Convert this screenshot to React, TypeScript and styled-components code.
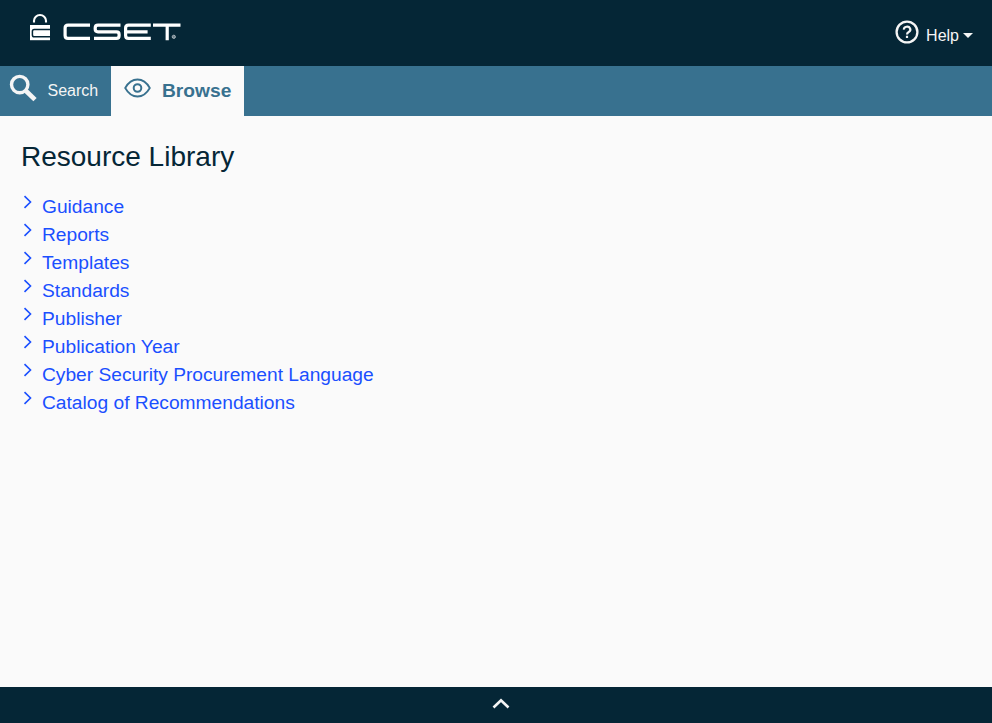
import React from "react";
import styled, { createGlobalStyle } from "styled-components";

const navy = "#052636";
const steel = "#38718f";
const paper = "#fafafa";
const link = "#1a4fff";

const GlobalStyle = createGlobalStyle`
  * { box-sizing: border-box; }
  body { margin: 0; background: ${paper}; color: ${navy}; font-family: "Liberation Sans", Arial, sans-serif; font-size: 16px; }
  button { font: inherit; color: inherit; border: 0; background: none; padding: 0; cursor: pointer; }
  svg { display: block; flex: none; }
`;

const Page = styled.div`
  display: flex;
  flex-direction: column;
  height: 100vh;
`;

const Header = styled.header`
  display: flex;
  justify-content: space-between;
  height: 66px;
  padding: 12px 19px 0 28px;
  background: ${navy};
  color: #f5f5f5;
`;

const HelpButton = styled.button`
  display: flex;
  height: 40px;
  line-height: 47px;
`;

const HelpIcon = styled.svg`
  margin: 8px 7px 0 0;
`;

const Caret = styled.span`
  margin: 21px 0 0 4px;
  border: 5px solid transparent;
  border-top-color: currentColor;
  border-bottom: 0;
  height: 0;
`;

const TabBar = styled.nav`
  display: flex;
  height: 50px;
  background: ${steel};
`;

const Tab = styled.button<{ $active?: boolean }>`
  display: flex;
  width: ${(p) => (p.$active ? 133 : 111)}px;
  padding-left: ${(p) => (p.$active ? 13 : 9)}px;
  gap: ${(p) => (p.$active ? 11 : 10.5)}px;
  background: ${(p) => (p.$active ? paper : "transparent")};
  color: ${(p) => (p.$active ? steel : "#f5f5f5")};
  font-size: ${(p) => (p.$active ? 19.2 : 16)}px;
  font-weight: ${(p) => (p.$active ? 700 : 400)};
  line-height: 49px;
`;

const TabIcon = styled.svg<{ $top: number }>`
  margin-top: ${(p) => p.$top}px;
`;

const Main = styled.main`
  flex: 1;
  padding: 25px 21px;
`;

const Title = styled.h1`
  margin: 0 0 19px;
  font-size: 28px;
  font-weight: 400;
  line-height: 32px;
`;

const Categories = styled.ul`
  margin: 0;
  padding: 0;
  list-style: none;
`;

const Category = styled.li`
  display: flex;
  height: 28px;
  padding-left: 2px;
  gap: 9px;
  color: ${link};
  font-size: 19.2px;
  line-height: 29px;
`;

const Chevron = styled.svg`
  margin-top: 3px;
`;

const Footer = styled.footer`
  display: flex;
  justify-content: center;
  height: 36px;
  padding: 10px 0 0 10px;
  background: ${navy};
`;

const categories = [
  "Guidance",
  "Reports",
  "Templates",
  "Standards",
  "Publisher",
  "Publication Year",
  "Cyber Security Procurement Language",
  "Catalog of Recommendations",
];

function Logo() {
  return (
    <svg width="154" height="32" viewBox="0 0 154 32" fill="none" stroke="#fff" role="img" aria-label="CSET">
      <path d="M6 10.5V8.8a6 5.8 0 0 1 12 0v1.7" strokeWidth="2.1" />
      <path d="M2 13h20v15.2H2z" fill="#fff" stroke="none" />
      <path d="M22 17.6H6.2q-1.8 0-1.8 1.8v3.6q0 1.8 1.8 1.8H22" stroke={navy} strokeWidth="1.5" />
      <g strokeWidth="3.2">
        <path d="M62 13.2H40q-2.9 0-2.9 2.9v7.4q0 2.9 2.9 2.9h22" />
        <path d="M92.5 13.2H70q-2.8 0-2.8 2.8v1q0 2.8 2.8 2.8h18.5q2.6 0 2.6 2.6v1.4q0 2.6-2.6 2.6H66" />
        <path d="M122.8 13.2h-22.3q-2.9 0-2.9 2.9v7.4q0 2.9 2.9 2.9h22.3M97.6 19.8h22" />
        <path d="M125 13.2h27.5M139.2 13.2v15" />
      </g>
      <circle cx="145.8" cy="24.8" r="1.6" stroke="#a9b4ba" strokeWidth="1" fill="#6f828d" />
    </svg>
  );
}

export default function App() {
  return (
    <Page>
      <GlobalStyle />
      <Header>
        <Logo />
        <HelpButton>
          <HelpIcon width="24" height="24" viewBox="0 0 24 24" fill="none" stroke="currentColor">
            <circle cx="12" cy="12" r="10.4" strokeWidth="2.3" />
            <path d="M8.9 9.6a3.2 2.8 0 1 1 4.8 2.3q-1.7.9-1.7 2.5M12 15.8V18" strokeWidth="2.2" />
          </HelpIcon>
          Help
          <Caret />
        </HelpButton>
      </Header>
      <TabBar>
        <Tab>
          <TabIcon $top={8} width="28" height="28" viewBox="0 0 28 28" fill="none" stroke="currentColor">
            <circle cx="10.7" cy="10.6" r="8.2" strokeWidth="3.4" />
            <path d="m16.5 16.5 9.5 9.2" strokeWidth="4.6" />
          </TabIcon>
          Search
        </Tab>
        <Tab $active>
          <TabIcon $top={12} width="27" height="20" viewBox="0 0 27 20" fill="none" stroke="currentColor">
            <path d="M1.2 10Q6 1.5 13.5 1.5T25.8 10Q21 18.5 13.5 18.5T1.2 10Z" strokeWidth="1.8" />
            <circle cx="13.5" cy="10" r="3.8" strokeWidth="2" />
          </TabIcon>
          Browse
        </Tab>
      </TabBar>
      <Main>
        <Title>Resource Library</Title>
        <Categories>
          {categories.map((name) => (
            <Category key={name}>
              <Chevron width="10" height="14" viewBox="0 0 10 14" fill="none" stroke="currentColor">
                <path d="m1.5 1.2 6 5.8-6 5.8" strokeWidth="1.6" />
              </Chevron>
              {name}
            </Category>
          ))}
        </Categories>
      </Main>
      <Footer>
        <svg width="18" height="14" viewBox="0 0 18 14" fill="none" stroke="#f5f5f5">
          <path d="m1.5 10.5 7.5-7.3 7.5 7.3" strokeWidth="2.6" />
        </svg>
      </Footer>
    </Page>
  );
}
